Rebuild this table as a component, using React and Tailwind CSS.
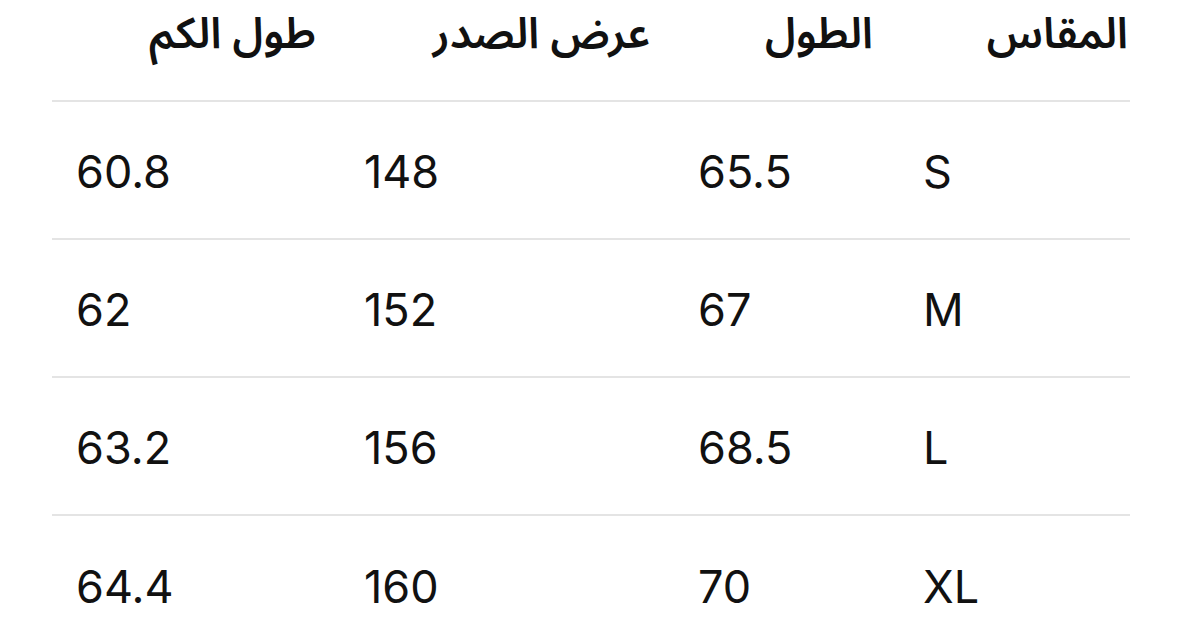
// جدول المقاسات – نسخة بسيطة بالاتجاه من اليمين لليسار
const HEADERS = ['المقاس', 'الطول', 'عرض الصدر', 'طول الكم']

const ROWS = [
  ['S', '65.5', '148', '60.8'],
  ['M', '67', '152', '62'],
  ['L', '68.5', '156', '63.2'],
  ['XL', '70', '160', '64.4'],
]

// عرض الأعمدة من اليمين لليسار
const COLS = 'grid grid-cols-[233px_223px_334px_288px]'

const arabic = { fontFamily: '"Noto Sans Arabic", "Noto Sans Arabic UI", "DejaVu Sans", sans-serif' }

export default function App() {
  return (
    <div dir="rtl" className="h-[644px] w-full overflow-hidden bg-white pl-[52px] pr-[49px]">
      <div className={`${COLS} h-[102px] items-start border-b-2 border-[#e4e4e4]`}>
        {HEADERS.map((h, i) => (
          <div
            key={h}
            className={`-mt-[5px] font-semibold text-[43px] leading-[80px] whitespace-nowrap text-[#111] ${i === 0 ? 'pr-[2px]' : 'pr-6'}`}
            style={arabic}
          >
            {h}
          </div>
        ))}
      </div>

      {ROWS.map((row, r) => (
        <div
          key={row[0]}
          className={`${COLS} h-[138px] ${r < ROWS.length - 1 ? 'border-b-2 border-[#e4e4e4]' : ''}`}
        >
          {row.map((v, i) => (
            <div
              key={i}
              dir="ltr"
              className={`flex items-center pt-[4px] text-[45px] text-[#111] font-['Inter',sans-serif] ${i === 0 ? 'pl-[26px]' : 'pl-6'}`}
            >
              {v}
            </div>
          ))}
        </div>
      ))}
    </div>
  )
}
